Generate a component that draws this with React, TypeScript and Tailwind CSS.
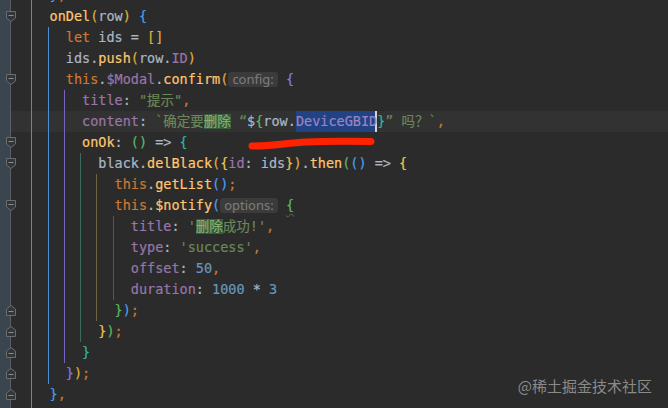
type Tok = [string, string];

// darcula-ish token colours
const D = 'text-[#a9b7c6]';
const K = 'text-[#cc7832]';
const F = 'text-[#ffc66d]';
const P = 'text-[#9876aa]';
const S = 'text-[#6a8759]';
const N = 'text-[#6897bb]';
// rainbow brackets
const GOLD = 'text-[#dfae3a]';
const YB = 'text-[#e8c84e]';
const BB = 'text-[#4a9ef0]';
const PB = 'text-[#8a7ae0]';
const GB = 'text-[#5cb860]';
const TB = 'text-[#2fb7a3]';

const HL = 'text-[#86ad72] bg-[#365c3c] inline-block h-[15px] leading-[15px]';
const SEL = 'text-[#9a82c4] bg-[#214283] inline-block h-[21px] shadow-[inset_-2px_0_0_#d4d4d4]';
const INLAY =
  "inline-block h-[15px] leading-[15px] px-[4px] rounded-[3px] bg-[#3b3b3b] text-[#7d7d7d] font-['Noto_Sans'] text-[13px] [-webkit-text-stroke:0px]";
const WAVY = 'text-[#5cb860] underline decoration-wavy decoration-[#5f6b48] decoration-1 underline-offset-[3px]';

const lines: { indent: number; toks: Tok[] }[] = [
  { indent: 4, toks: [['}', BB], [',', K]] },
  { indent: 4, toks: [['onDel', F], ['(', GOLD], ['row', D], [')', GOLD], [' ', D], ['{', BB]] },
  { indent: 6, toks: [['let', K], [' ids = ', D], ['[]', GOLD]] },
  { indent: 6, toks: [['ids.', D], ['push', F], ['(', GOLD], ['row.', D], ['ID', P], [')', GOLD]] },
  {
    indent: 6,
    toks: [['this', K], ['.', D], ['$Modal', P], ['.', D], ['confirm', F], ['(', GOLD], ['config:', INLAY], [' ', D], ['{', PB]],
  },
  { indent: 8, toks: [['title', P], [': ', D], ['"提示"', S], [',', K]] },
  {
    indent: 8,
    toks: [
      ['content', P],
      [': ', D],
      ['`确定要', S],
      ['删除', HL],
      [' “', S],
      ['$', D],
      ['{', GB],
      ['row.', D],
      ['DeviceGBID', SEL],
      ['}', TB],
      ['” 吗？`', S],
      [',', K],
    ],
  },
  { indent: 8, toks: [['onOk', F], [': ', D], ['()', GB], [' => ', D], ['{', TB]] },
  {
    indent: 10,
    toks: [
      ['black.', D],
      ['delBlack', F],
      ['(', GOLD],
      ['{', YB],
      ['id', P],
      [': ids', D],
      ['}', YB],
      [')', GOLD],
      ['.', D],
      ['then', F],
      ['(', GB],
      ['()', BB],
      [' => ', D],
      ['{', YB],
    ],
  },
  { indent: 12, toks: [['this', K], ['.', D], ['getList', F], ['()', BB], [';', K]] },
  { indent: 12, toks: [['this', K], ['.', D], ['$notify', F], ['(', BB], ['options:', INLAY], [' ', D], ['{', WAVY]] },
  { indent: 14, toks: [['title', P], [': ', D], ["'", S], ['删除', HL], ["成功!'", S], [',', K]] },
  { indent: 14, toks: [['type', P], [': ', D], ["'success'", S], [',', K]] },
  { indent: 14, toks: [['offset', P], [': ', D], ['50', N], [',', K]] },
  { indent: 14, toks: [['duration', P], [': ', D], ['1000', N], [' * ', D], ['3', N]] },
  { indent: 12, toks: [['}', GB], [')', BB], [';', K]] },
  { indent: 10, toks: [['}', YB], [')', GB], [';', K]] },
  { indent: 8, toks: [['}', TB]] },
  { indent: 6, toks: [['}', PB], [')', GOLD], [';', K]] },
  { indent: 4, toks: [['}', BB], [',', K]] },
  { indent: 4, toks: [] },
];

// indent guides: column, colour, first and last line they cross
const guides = [
  { col: 2, color: 'border-[#5e9a50]', from: 0, to: 20 },
  { col: 4, color: 'border-[#4a90d8]', from: 2, to: 18 },
  { col: 6, color: 'border-[#7663c0]', from: 5, to: 17 },
  { col: 8, color: 'border-[#3a6b5c]', from: 8, to: 16 },
  { col: 10, color: 'border-[#6a683c]', from: 9, to: 15 },
  { col: 12, color: 'border-[#555555]', from: 11, to: 14 },
];

const openFolds = [1, 4, 7, 8, 10];
const closeFolds = [15, 16, 17, 18, 19];

function FoldOpen() {
  return (
    <svg width="10" height="11" viewBox="0 0 10 11">
      <path d="M0.5 0.5H9.5V7L5 10.5L0.5 7Z" fill="#343638" stroke="#6a6d70" />
      <path d="M2.5 4.5H7.5" stroke="#8a8d90" />
    </svg>
  );
}

function FoldClose() {
  return (
    <svg width="10" height="11" viewBox="0 0 10 11">
      <path d="M0.5 10.5H9.5V4L5 0.5L0.5 4Z" fill="#343638" stroke="#6a6d70" />
      <path d="M2.5 6.5H7.5" stroke="#8a8d90" />
    </svg>
  );
}

const CURRENT = 6;

export default function App() {
  return (
    <div className="relative h-[408px] w-[668px] overflow-hidden bg-[#2b2b2b] font-['DejaVu_Sans_Mono','Noto_Sans_CJK_SC',monospace] text-[13.5px]">
      <div className="-mt-[15px] flex flex-col [-webkit-text-stroke:0.2px]">
        {lines.map((line, i) => {
          const cells = [];
          for (let c = 2; c < line.indent; c += 2) {
            const g = guides.find((gd) => gd.col === c && i >= gd.from && i <= gd.to);
            cells.push(
              <div key={c} className={`h-[21px] w-[2ch] shrink-0 ${g ? `border-l ${g.color}` : ''}`} />
            );
          }
          return (
            <div key={i} className="flex h-[21px]">
              <div
                className={`flex w-[17px] shrink-0 items-center pl-[6px] ${
                  i === CURRENT
                    ? 'bg-[linear-gradient(to_right,#3a4550_10px,#5b6065_10px,#5b6065_11px,#323232_11px)]'
                    : 'bg-[linear-gradient(to_right,#3a4550_10px,#5b6065_10px,#5b6065_11px,#2b2b2b_11px)]'
                }`}
              >
                {openFolds.includes(i) && <FoldOpen />}
                {closeFolds.includes(i) && <FoldClose />}
              </div>
              <div className={`flex flex-1 ${i === CURRENT ? 'bg-[#323232]' : ''}`}>
                <div className="h-[21px] w-[calc(2ch-2px)] shrink-0" />
                {cells}
                <div className="whitespace-pre pl-[2px] leading-[21px]">
                  {line.toks.map(([t, cls], k) => (
                    <span key={k} className={cls}>
                      {t}
                    </span>
                  ))}
                </div>
              </div>
            </div>
          );
        })}
      </div>

      {/* red marker stroke */}
      <svg className="pointer-events-none absolute left-[246px] top-[134px]" width="132" height="18" viewBox="0 0 132 18">
        <path d="M6 12C25 12.5 40 9 60 8S100 7 125 7.5" fill="none" stroke="#ff2200" strokeWidth="7" strokeLinecap="round" />
      </svg>

      <div className="absolute right-[16px] top-[375px] font-['Noto_Sans_CJK_SC',sans-serif] text-[15px] text-[#8a8a8a]">
        @稀土掘金技术社区
      </div>
    </div>
  );
}
